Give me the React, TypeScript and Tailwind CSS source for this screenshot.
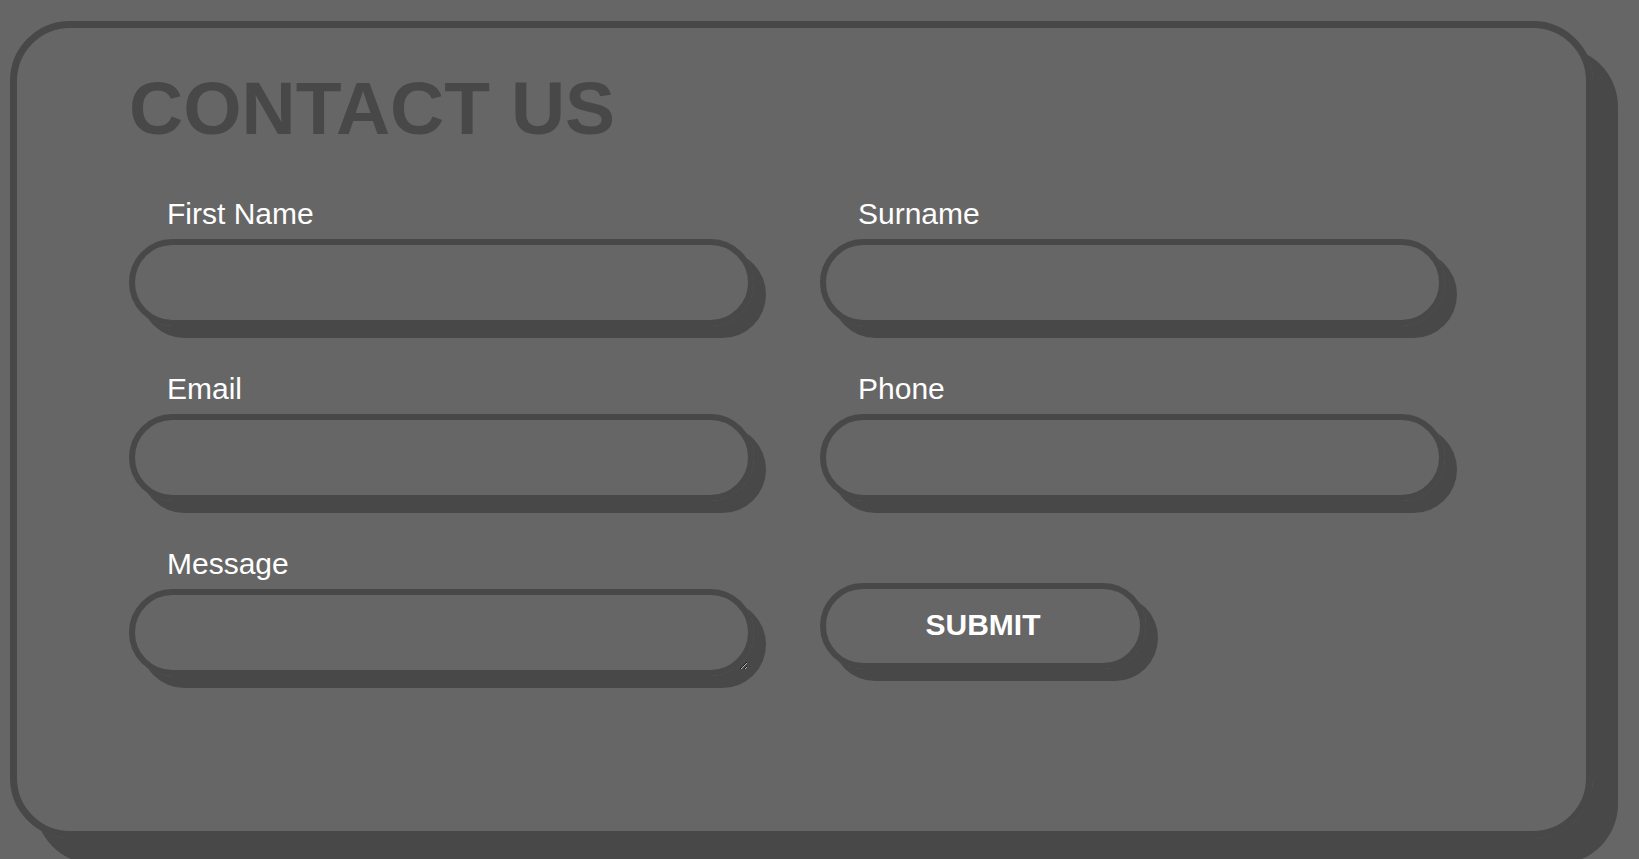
import React from "react";

const fieldClass =
  "block w-[625px] h-[87px] rounded-full border-[6px] border-[#484848] bg-transparent shadow-[12px_12px_0_#484848] outline-none px-8 text-[24px] text-white";

function Field({ label, textarea }: { label: string; textarea?: boolean }) {
  return (
    <div className="flex flex-col">
      <label className="block pl-[38px] text-[30px] leading-[38px] text-white">
        {label}
      </label>
      {textarea ? (
        <textarea className={`${fieldClass} mt-[6px] py-4`} />
      ) : (
        <input type="text" className={`${fieldClass} mt-[6px]`} />
      )}
    </div>
  );
}

export default function App() {
  return (
    <div className="min-h-screen overflow-hidden bg-[#666666] font-['Liberation_Sans',Arial,sans-serif]">
      {/* Card */}
      <div className="ml-[10px] mt-[21px] w-[1583px] h-[817px] rounded-[60px] border-[7px] border-[#484848] shadow-[25px_26px_0_#484848] pl-[112px] pt-[43px]">
        <h1 className="text-[75px] leading-[75px] font-bold text-[#484848]">
          CONTACT US
        </h1>

        <form
          className="mt-[49px] grid grid-cols-[625px_625px] gap-x-[66px] gap-y-[44px]"
          onSubmit={(e) => e.preventDefault()}
        >
          <Field label="First Name" />
          <Field label="Surname" />
          <Field label="Email" />
          <Field label="Phone" />
          <Field label="Message" textarea />
          <div>
            <button
              type="submit"
              className="mt-[38px] w-[326px] h-[86px] pb-[4px] rounded-full border-[6px] border-[#484848] bg-transparent shadow-[12px_12px_0_#484848] text-[30px] font-bold text-white"
            >
              SUBMIT
            </button>
          </div>
        </form>
      </div>
    </div>
  );
}
